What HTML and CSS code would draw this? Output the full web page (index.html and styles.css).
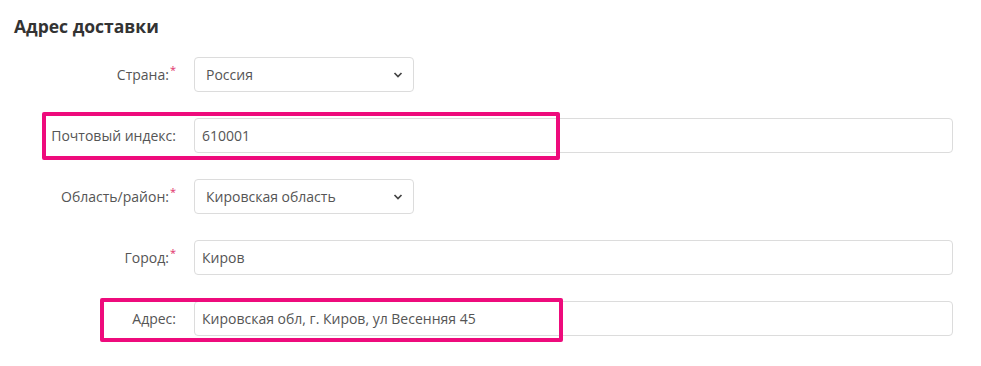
FILE: index.html
```html
<!DOCTYPE html>
<html lang="ru">
<head>
    <meta charset="UTF-8">
    <title>Адрес доставки</title>
    <link rel="stylesheet" href="styles.css">
</head>
<body>

    <div class="container">
        <h2>Адрес доставки</h2>

        <form class="address-form">
            <div class="form-row">
                <label for="country">Страна:<span class="req">*</span></label>
                <div class="select-wrap">
                    <select id="country" name="country">
                        <option>Россия</option>
                    </select>
                    <svg class="chevron" width="10" height="6" viewBox="0 0 10 6"><path d="M1.5 1l3.5 3.5 3.5-3.5" fill="none" stroke="#444" stroke-width="1.7"/></svg>
                </div>
            </div>

            <div class="form-row">
                <label for="zip">Почтовый индекс:</label>
                <input type="text" id="zip" name="zip" value="610001">
            </div>

            <div class="form-row">
                <label for="region">Область/район:<span class="req">*</span></label>
                <div class="select-wrap">
                    <select id="region" name="region">
                        <option>Кировская область</option>
                    </select>
                    <svg class="chevron" width="10" height="6" viewBox="0 0 10 6"><path d="M1.5 1l3.5 3.5 3.5-3.5" fill="none" stroke="#444" stroke-width="1.7"/></svg>
                </div>
            </div>

            <div class="form-row">
                <label for="city">Город:<span class="req">*</span></label>
                <input type="text" id="city" name="city" value="Киров">
            </div>

            <div class="form-row">
                <label for="address">Адрес:</label>
                <input type="text" id="address" name="address" value="Кировская обл, г. Киров, ул Весенняя 45">
            </div>
        </form>

        <!-- annotation frames -->
        <div class="mark mark-zip"></div>
        <div class="mark mark-address"></div>
    </div>

</body>
</html>
```

FILE: styles.css
```css
* {
    margin: 0;
    padding: 0;
    box-sizing: border-box;
}

body {
    font-family: 'Open Sans', 'Liberation Sans', sans-serif;
    background: #fff;
    color: #555;
    font-size: 14px;
}

.container {
    position: relative;
    padding: 14px 28px 0 0;
}

h2 {
    font-size: 17.5px;
    font-weight: bold;
    color: #333;
    line-height: 24px;
    margin-left: 14px;
    margin-bottom: 19px;
}

.form-row {
    display: grid;
    grid-template-columns: 176px 1fr;
    column-gap: 18px;
    align-items: center;
    margin-bottom: 26px;
}

label {
    text-align: right;
    color: #555;
    font-size: 14px;
}

.req {
    color: #e0306a;
    font-size: 11px;
    position: relative;
    top: -6px;
    margin-left: 1px;
}

input,
select {
    font-family: inherit;
    font-size: 14px;
    color: #555;
    height: 35px;
    border: 1px solid #dcdcdc;
    border-radius: 4px;
    background: #fff;
    outline: none;
}

input {
    width: 100%;
    padding: 0 7px;
}

.select-wrap {
    position: relative;
    width: 220px;
}

select {
    width: 100%;
    appearance: none;
    padding: 0 30px 0 11px;
}

.chevron {
    position: absolute;
    right: 11px;
    top: 15px;
    pointer-events: none;
}

.mark {
    position: absolute;
    border: 4px solid #ee0b7c;
    border-radius: 2px;
}

.mark-zip {
    left: 42px;
    top: 112px;
    width: 518px;
    height: 48px;
}

.mark-address {
    left: 100px;
    top: 298px;
    width: 463px;
    height: 44px;
}
```
